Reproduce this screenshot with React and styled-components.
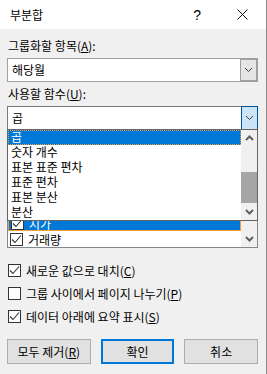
import React from 'react';
import styled, { createGlobalStyle } from 'styled-components';

const GlobalStyle = createGlobalStyle`
  html, body {
    margin: 0;
    padding: 0;
    background: #f0f0f0;
  }
  * {
    box-sizing: border-box;
  }
`;

const functions = ['곱', '숫자 개수', '표본 표준 편차', '표준 편차', '표본 분산', '분산'];
const fields = ['일자', '종가', '고가', '저가', '시가', '거래량'];

const Chevron = ({ up, bold }) => (
    <svg width="9" height="6" viewBox="0 0 9 6">
        <polyline
            points={up ? '1,5 4.5,1.5 8,5' : '1,1 4.5,4.5 8,1'}
            fill="none"
            stroke={bold ? '#606060' : '#404040'}
            strokeWidth={bold ? 2 : 1}
        />
    </svg>
);

const Check = () => (
    <svg width="11" height="11" viewBox="0 0 11 11">
        <polyline points="1,5.5 4,8.5 10,1.5" fill="none" stroke="#333" strokeWidth="1.1" />
    </svg>
);

function App() {
    return (
        <Window>
            <GlobalStyle />
            <TitleBar>
                <Title>부분합</Title>
                <TitleButtons>
                    <Help>?</Help>
                    <svg width="11" height="11" viewBox="0 0 11 11">
                        <path d="M0.5 0.5 L10.5 10.5 M10.5 0.5 L0.5 10.5" stroke="#111" strokeWidth="1" />
                    </svg>
                </TitleButtons>
            </TitleBar>

            <Body>
                <Label $top={9}>그룹화할 항목(<u>A</u>):</Label>
                <Combo>
                    <ComboText>해당월</ComboText>
                    <DropButton><Chevron /></DropButton>
                </Combo>

                <Label $top={4}>사용할 함수(<u>U</u>):</Label>
                <ComboWrap>
                    <Combo $focused>
                        <ComboText>곱</ComboText>
                        <DropButton $active><Chevron /></DropButton>
                    </Combo>
                    <DropList>
                        <Options>
                            {functions.map((f, i) => (
                                <Option key={f} $selected={i === 0}>{f}</Option>
                            ))}
                        </Options>
                        <ScrollBar>
                            <ArrowBox><Chevron up bold /></ArrowBox>
                            <Track>
                                <Thumb />
                            </Track>
                            <ArrowBox><Chevron bold /></ArrowBox>
                        </ScrollBar>
                    </DropList>
                </ComboWrap>

                {/* hidden behind the open dropdown */}
                <Label $top={4}>요약할 항목(<u>D</u>):</Label>
                <FieldList>
                    <FieldRows>
                        {fields.map((f) => (
                            <FieldRow key={f} $selected={f === '시가'}>
                                <Box><Check /></Box>
                                <span>{f}</span>
                            </FieldRow>
                        ))}
                    </FieldRows>
                    <ListScroll>
                        <ArrowBox><Chevron up bold /></ArrowBox>
                        <ArrowBox><Chevron bold /></ArrowBox>
                    </ListScroll>
                </FieldList>

                <Options2>
                    <CheckRow>
                        <Box><Check /></Box>
                        <span>새로운 값으로 대치(<u>C</u>)</span>
                    </CheckRow>
                    <CheckRow>
                        <Box />
                        <span>그룹 사이에서 페이지 나누기(<u>P</u>)</span>
                    </CheckRow>
                    <CheckRow>
                        <Box><Check /></Box>
                        <span>데이터 아래에 요약 표시(<u>S</u>)</span>
                    </CheckRow>
                </Options2>

                <Buttons>
                    <Button $w={84}>모두 제거(<u>R</u>)</Button>
                    <Button $w={74} $primary>확인</Button>
                    <Button $w={74}>취소</Button>
                </Buttons>
            </Body>
        </Window>
    );
}

export default App;

const Window = styled.div`
    width: 267px;
    height: 374px;
    background: #f0f0f0;
    border-right: 1px solid #8a8a8a;
    font-family: "Noto Sans CJK KR", "Noto Sans", sans-serif;
    font-size: 12px;
    color: #000;
    overflow: hidden;
`;

const TitleBar = styled.div`
    height: 29px;
    background: #fff;
    display: flex;
    align-items: center;
    justify-content: space-between;
    padding: 0 18px 0 10px;
`;

const Title = styled.div`
    font-size: 12px;
`;

const TitleButtons = styled.div`
    display: flex;
    align-items: center;
    gap: 36px;
`;

const Help = styled.span`
    font-family: "Liberation Sans", sans-serif;
    font-size: 14px;
`;

const Body = styled.div`
    display: flex;
    flex-direction: column;
    padding: 0 8px 0 7px;
`;

const Label = styled.div`
    margin-top: ${(p) => p.$top}px;
    height: 16px;
    line-height: 16px;
    margin-bottom: 4px;
    padding-left: 1px;
    u { text-underline-offset: 1px; }
`;

const ComboWrap = styled.div`
    position: relative;
`;

const Combo = styled.div`
    height: 24px;
    background: #fff;
    border: 1px solid ${(p) => (p.$focused ? '#7a7a7a' : '#a0a0a0')};
    display: flex;
    align-items: stretch;
`;

const ComboText = styled.div`
    flex: 1;
    padding-left: 4px;
    line-height: 22px;
`;

const DropButton = styled.div`
    width: 17px;
    display: flex;
    align-items: center;
    justify-content: center;
    background: ${(p) => (p.$active ? '#cce4f7' : '#e5e5e5')};
    border: 1px solid ${(p) => (p.$active ? '#005499' : '#a0a0a0')};
    margin: ${(p) => (p.$active ? '-1px -1px -1px 0' : '0')};
`;

const DropList = styled.div`
    position: absolute;
    top: calc(100% - 1px);
    left: 0;
    right: 0;
    height: 92px;
    background: #fff;
    border: 1px solid #646464;
    display: flex;
    z-index: 2;
`;

const Options = styled.div`
    flex: 1;
    display: flex;
    flex-direction: column;
`;

const Option = styled.div`
    height: 15px;
    line-height: 14px;
    padding-left: 3px;
    background: ${(p) => (p.$selected ? '#0078d7' : 'transparent')};
    color: ${(p) => (p.$selected ? '#fff' : '#000')};
    outline: ${(p) => (p.$selected ? '1px dotted #f0a040' : 'none')};
    outline-offset: -1px;
`;

const ScrollBar = styled.div`
    width: 16px;
    background: #f0f0f0;
    display: flex;
    flex-direction: column;
`;

const ArrowBox = styled.div`
    height: 16px;
    display: flex;
    align-items: center;
    justify-content: center;
`;

const Track = styled.div`
    flex: 1;
    position: relative;
`;

const Thumb = styled.div`
    position: absolute;
    left: 0;
    right: 0;
    top: 26px;
    height: 31px;
    background: #a6a6a6;
`;

const FieldList = styled.div`
    height: 94px;
    background: #fff;
    border: 1px solid #828790;
    display: flex;
    overflow: hidden;
`;

const FieldRows = styled.div`
    flex: 1;
    display: flex;
    flex-direction: column;
    justify-content: flex-end;
`;

const FieldRow = styled.div`
    height: 16px;
    flex-shrink: 0;
    display: flex;
    align-items: center;
    gap: 5px;
    padding-left: 2px;
    background: ${(p) => (p.$selected ? '#0078d7' : 'transparent')};
    color: ${(p) => (p.$selected ? '#fff' : '#000')};
    border: ${(p) => (p.$selected ? '1px solid #f39c32' : 'none')};
`;

const ListScroll = styled.div`
    width: 16px;
    background: #f0f0f0;
    display: flex;
    flex-direction: column;
    justify-content: space-between;
`;

const Box = styled.div`
    width: 13px;
    height: 13px;
    flex-shrink: 0;
    background: #fff;
    border: 1px solid #333;
    display: flex;
    align-items: center;
    justify-content: center;
`;

const Options2 = styled.div`
    margin-top: 11px;
    display: flex;
    flex-direction: column;
`;

const CheckRow = styled.div`
    height: 23px;
    display: flex;
    align-items: center;
    gap: 5px;
    padding-left: 1px;
    u { text-underline-offset: 1px; }
`;

const Buttons = styled.div`
    margin-top: 11px;
    display: flex;
    gap: 10px;
`;

const Button = styled.div`
    width: ${(p) => p.$w}px;
    height: 25px;
    background: #e1e1e1;
    border: ${(p) => (p.$primary ? '2px solid #0078d7' : '1px solid #adadad')};
    display: flex;
    align-items: center;
    justify-content: center;
    u { text-underline-offset: 1px; }
`;
